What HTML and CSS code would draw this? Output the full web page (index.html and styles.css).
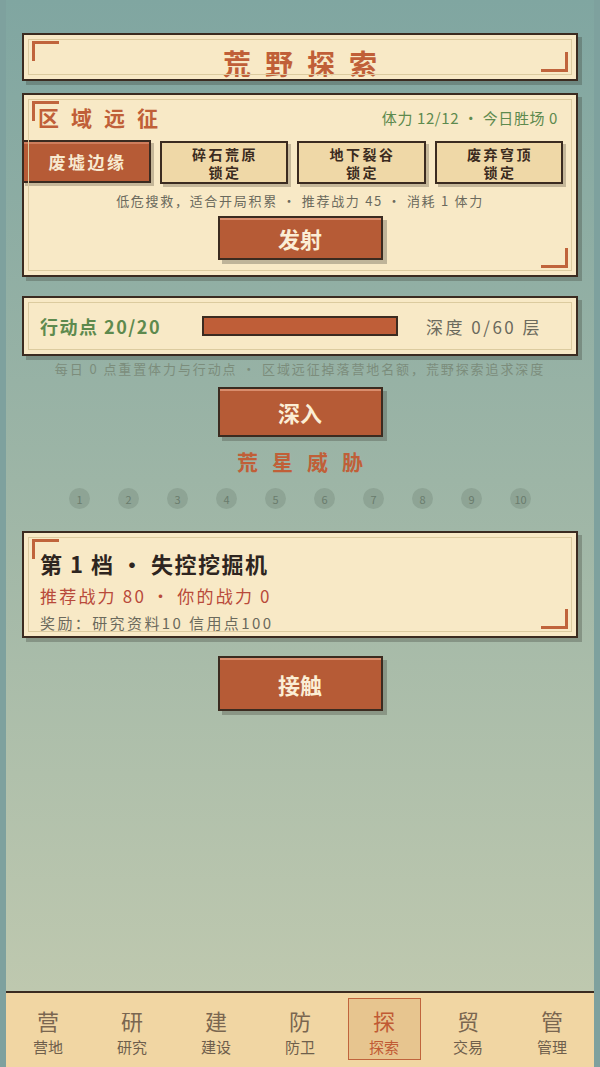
FILE: index.html
```html
<!DOCTYPE html>
<html lang="zh">
<head>
<meta charset="utf-8">
<link rel="stylesheet" href="styles.css">
</head>
<body>
<div class="app">
  <main class="content">
    <section class="panel title-panel">
      <h1 class="page-title">荒野探索</h1>
    </section>

    <section class="panel region-panel">
      <div class="region-head">
        <h2 class="region-title">区域远征</h2>
        <span class="region-stats">体力 12/12 · 今日胜场 0</span>
      </div>
      <div class="zone-row">
        <button class="zone active"><span class="zone-line">废墟边缘</span></button>
        <button class="zone"><span class="zone-line">碎石荒原</span><span class="zone-line">锁定</span></button>
        <button class="zone"><span class="zone-line">地下裂谷</span><span class="zone-line">锁定</span></button>
        <button class="zone"><span class="zone-line">废弃穹顶</span><span class="zone-line">锁定</span></button>
      </div>
      <p class="zone-desc">低危搜救，适合开局积累 · 推荐战力 45 · 消耗 1 体力</p>
      <button class="big-btn btn-launch">发射</button>
    </section>

    <section class="panel ap-panel">
      <span class="ap-label">行动点 20/20</span>
      <div class="ap-bar"><div class="ap-fill" style="width:100%"></div></div>
      <span class="depth">深度 0/60 层</span>
    </section>

    <p class="note">每日 0 点重置体力与行动点 · 区域远征掉落营地名额，荒野探索追求深度</p>

    <button class="big-btn btn-deep">深入</button>

    <h2 class="threat-title">荒星威胁</h2>
    <div class="tiers">
      <span class="tier">1</span><span class="tier">2</span><span class="tier">3</span><span class="tier">4</span><span class="tier">5</span>
      <span class="tier">6</span><span class="tier">7</span><span class="tier">8</span><span class="tier">9</span><span class="tier">10</span>
    </div>

    <section class="panel boss-card">
      <h3 class="boss-name">第 1 档 · 失控挖掘机</h3>
      <p class="boss-power">推荐战力 80 · 你的战力 0</p>
      <p class="boss-reward">奖励：研究资料10 信用点100</p>
    </section>

    <button class="big-btn btn-contact">接触</button>
  </main>

  <nav class="nav">
    <div class="nav-item"><span class="nav-ico">营</span><span class="nav-label">营地</span></div>
    <div class="nav-item"><span class="nav-ico">研</span><span class="nav-label">研究</span></div>
    <div class="nav-item"><span class="nav-ico">建</span><span class="nav-label">建设</span></div>
    <div class="nav-item"><span class="nav-ico">防</span><span class="nav-label">防卫</span></div>
    <div class="nav-item active"><span class="nav-ico">探</span><span class="nav-label">探索</span></div>
    <div class="nav-item"><span class="nav-ico">贸</span><span class="nav-label">交易</span></div>
    <div class="nav-item"><span class="nav-ico">管</span><span class="nav-label">管理</span></div>
  </nav>
</div>
</body>
</html>
```
FILE: styles.css
```css
* { box-sizing: border-box; }
html, body { margin: 0; padding: 0; }
body {
  background: #7ea19e;
  font-family: "Noto Sans CJK SC", "Noto Sans", sans-serif;
  color: #3b2b20;
}
.app {
  margin: 0 6px;
  height: 1067px;
  display: flex;
  flex-direction: column;
  background: linear-gradient(180deg, #80a6a1 0%, #9db5a6 45%, #c3cbb0 100%);
}
.content {
  flex: 1;
  padding: 33px 16px 0;
  display: flex;
  flex-direction: column;
  align-items: center;
}
.panel {
  position: relative;
  width: 556px;
  background: #f8e9c6;
  border: 2px solid #3b2b20;
  outline: 1px solid #dccb9f;
  outline-offset: -7px;
  box-shadow: 4px 4px 0 rgba(55, 60, 50, 0.3);
}
.panel::before, .panel::after {
  content: "";
  position: absolute;
  width: 24px;
  height: 17px;
  pointer-events: none;
}
.panel::before {
  left: 8px; top: 6px;
  border-left: 3px solid #c0643c;
  border-top: 3px solid #c0643c;
}
.panel::after {
  right: 8px; bottom: 7px;
  border-right: 3px solid #c0643c;
  border-bottom: 3px solid #c0643c;
}
.ap-panel::before, .ap-panel::after { display: none; }

.title-panel { height: 48px; padding-top: 13px; text-align: center; }
.page-title {
  margin: 0;
  font-size: 28px;
  line-height: 30px;
  font-weight: 700;
  letter-spacing: 14px;
  margin-right: -14px;
  color: #c05f38;
}

.region-panel { margin-top: 12px; height: 184px; padding: 0; }
.region-head {
  display: flex;
  justify-content: space-between;
  align-items: center;
  padding: 10px 18px 0 14px;
  height: 34px;
}
.region-title {
  margin: 0;
  font-size: 21px;
  line-height: 24px;
  font-weight: 700;
  letter-spacing: 12px;
  color: #c05f38;
}
.region-stats { font-size: 15px; letter-spacing: 0.6px; color: #5e8a4e; }
.zone-row {
  margin: 11px 0 0 -2px;
  width: 541px;
  display: grid;
  grid-template-columns: repeat(4, 1fr);
  gap: 9px;
}
.zone {
  height: 43px;
  margin-top: 1px;
  border: 2px solid #3b2b20;
  background: #efd8a7;
  box-shadow: 3px 3px 0 rgba(80, 70, 50, 0.3);
  font-family: inherit;
  font-weight: 700;
  font-size: 14px;
  letter-spacing: 2.5px;
  line-height: 19px;
  color: #3b2b20;
  padding: 0;
  display: flex;
  flex-direction: column;
  align-items: center;
  justify-content: center;
}
.zone-line { display: block; height: 18px; line-height: 18px; overflow: visible; margin-right: -2.5px; }
.zone.active {
  margin-top: 0;
  font-size: 17px;
  letter-spacing: 2.5px;
  background: #b65b36;
  color: #f8ead0;
  box-shadow: inset 0 2px 0 #cf7d5c, 3px 3px 0 rgba(80, 70, 50, 0.3);
}
.zone.active .zone-line { height: 22px; line-height: 22px; }
.zone-desc {
  margin: 9px 0 0;
  text-align: center;
  font-size: 13px;
  letter-spacing: 1.7px;
  line-height: 16px;
  color: #6b6a5d;
}

.big-btn {
  display: block;
  width: 165px;
  border: 2px solid #3b2b20;
  background: #b65b36;
  color: #fbeed5;
  font-family: inherit;
  font-weight: 700;
  font-size: 22px;
  padding: 0;
  box-shadow: inset 0 3px 0 -1px #d98d6d, 4px 4px 0 rgba(60, 60, 50, 0.3);
}
.btn-launch { height: 44px; margin: 7px auto 0; }
.btn-deep { height: 50px; margin-top: 10px; }
.btn-contact { height: 55px; margin-top: 18px; }

.ap-panel {
  margin-top: 19px;
  height: 60px;
  display: flex;
  align-items: center;
  padding-left: 16px;
}
.ap-label {
  width: 162px;
  font-size: 18px;
  letter-spacing: 1.5px;
  font-weight: 700;
  color: #5e8a4e;
}
.ap-bar {
  width: 196px;
  height: 20px;
  border: 2px solid #3b2b20;
  background: #e8d4a8;
}
.ap-fill { height: 100%; background: #bf5e38; }
.depth {
  margin-left: 28px;
  font-size: 17px;
  letter-spacing: 2.5px;
  color: #6b6a5d;
}

.note {
  margin: 5px 0 0;
  font-size: 13px;
  letter-spacing: 1.9px;
  line-height: 16px;
  color: #7c8d7c;
  text-align: center;
  white-space: nowrap;
}

.threat-title {
  margin: 12px 0 0;
  font-size: 21px;
  line-height: 24px;
  font-weight: 700;
  letter-spacing: 14px;
  margin-right: -14px;
  color: #c05f38;
}
.tiers {
  margin-top: 15px;
  display: flex;
  gap: 28px;
}
.tier {
  width: 21px;
  height: 21px;
  border-radius: 50%;
  background: #8ea495;
  color: #6a7c6d;
  font-size: 11px;
  display: flex;
  align-items: center;
  justify-content: center;
}

.boss-card {
  margin-top: 22px;
  height: 107px;
  overflow: hidden;
  padding: 17px 0 0 16px;
}
.boss-name {
  margin: 0;
  font-size: 22px;
  letter-spacing: 1.5px;
  line-height: 26px;
  font-weight: 700;
  color: #2e2520;
}
.boss-power {
  margin: 9px 0 0;
  font-size: 17px;
  letter-spacing: 2.2px;
  line-height: 22px;
  color: #b84a3a;
}
.boss-reward {
  margin: 6px 0 0;
  font-size: 15px;
  letter-spacing: 2.4px;
  line-height: 20px;
  color: #6b6a5d;
}

.nav {
  height: 76px;
  border-top: 2px solid #3b2b20;
  background: #f1d6a3;
  display: grid;
  grid-template-columns: repeat(7, 1fr);
  padding: 5px 0 0;
}
.nav-item {
  justify-self: center;
  width: 73px;
  height: 62px;
  display: flex;
  flex-direction: column;
  align-items: center;
  padding-top: 9px;
  color: #7a6650;
  border: 1px solid transparent;
}
.nav-ico { font-size: 22px; line-height: 24px; }
.nav-label { font-size: 15px; line-height: 20px; margin-top: 5px; color: #6f5f4c; }
.nav-item.active {
  background: #e7c58f;
  border-color: #c0643c;
  color: #c05a34;
}
.nav-item.active .nav-label { color: #c05a34; }
```
